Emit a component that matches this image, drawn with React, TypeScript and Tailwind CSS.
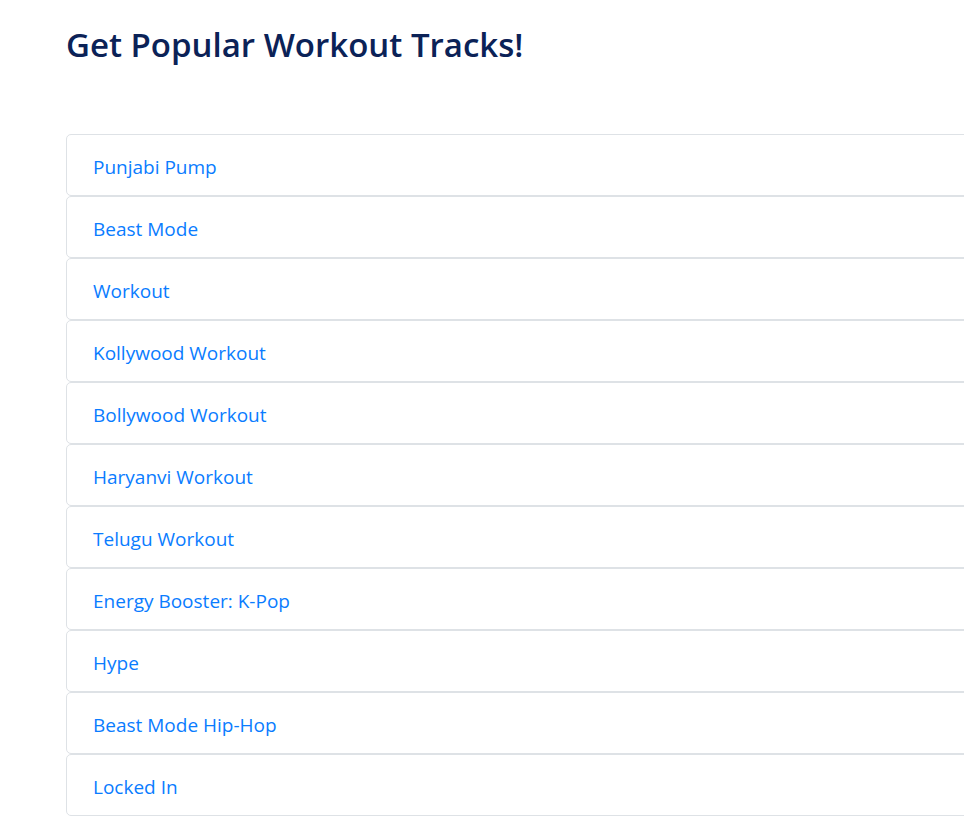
const tracks = [
  "Punjabi Pump",
  "Beast Mode",
  "Workout",
  "Kollywood Workout",
  "Bollywood Workout",
  "Haryanvi Workout",
  "Telugu Workout",
  "Energy Booster: K-Pop",
  "Hype",
  "Beast Mode Hip-Hop",
  "Locked In",
];

const App = () => {
  return (
    <div
      className="w-full overflow-hidden bg-white"
      style={{ fontFamily: '"Open Sans", "Noto Sans", sans-serif' }}
    >
      <div className="pl-[66px] pt-[23px] w-[1100px]">
        <h1 className="text-[33px] leading-[43px] font-semibold text-[#0b2257] m-0">
          Get Popular Workout Tracks!
        </h1>
        <ul className="mt-[68px] flex flex-col">
          {tracks.map((t) => (
            <li
              key={t}
              className="border border-[#dee2e6] rounded-[5px] pl-[26px] pr-6 pt-[18px] pb-[14px] text-[19px] leading-[28px] text-[#0a7cff]"
            >
              {t}
            </li>
          ))}
        </ul>
      </div>
    </div>
  );
};

export default App;
